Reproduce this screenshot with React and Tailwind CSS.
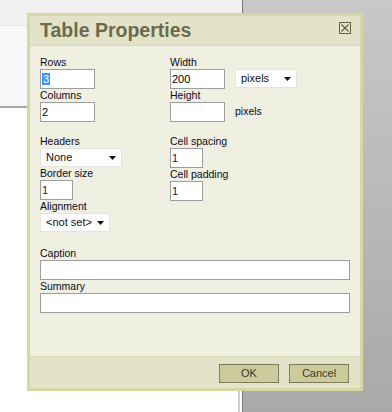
import React from 'react';

const Label = ({ children }) => (
  <div className="h-[13px] leading-[13px] text-[10.5px] text-[#0b0b1e] whitespace-nowrap">{children}</div>
);

const Field = ({ className = '', children }) => (
  <div className={`flex items-center border border-[#9d9d9d] bg-white pl-px text-[11px] leading-none ${className}`}>
    {children}
  </div>
);

const Arrow = () => (
  <svg width="7" height="4" viewBox="0 0 7 4" className="shrink-0">
    <polygon points="0,0 7,0 3.5,4" fill="#111" />
  </svg>
);

const Select = ({ className = '', value }) => (
  <div className={`flex items-center justify-between border border-[#e4e4dc] bg-white pl-[5px] pr-[5px] text-[11px] leading-none text-[#111] ${className}`}>
    <span>{value}</span>
    <Arrow />
  </div>
);

export default function App() {
  return (
    <div className="relative h-[412px] w-[392px] overflow-hidden bg-white font-['Liberation_Sans',Arial,sans-serif]">
      {/* page behind the dialog */}
      <div className="absolute left-0 top-0 h-[25px] w-[242px] bg-[#f1f1f1]" />
      <div className="absolute left-0 top-[25px] h-[81px] w-[242px] border-t border-[#e6e6e6] bg-[#f7f7f7]" />
      <div className="absolute left-0 top-[106px] h-[2px] w-[242px] bg-[#a6a6a6]" />
      <div className="absolute bottom-0 left-[238px] top-[380px] w-[2px] bg-[#cfcfcf]" />
      <div className="absolute bottom-0 left-[242px] right-0 top-0 border-l border-[#7a7a7a] bg-gradient-to-b from-[#c8c8c8] to-[#a9a9a9]" />

      {/* dialog */}
      <div className="absolute left-[27px] top-[13px] flex h-[378px] w-[336px] flex-col border-[3px] border-[#d6d6a6] bg-[#efefe2]">
        <div className="flex h-[30px] shrink-0 items-start justify-between border-b border-[#d9d9b4] bg-[#e3e3c9] pl-[10px] pr-[9px]">
          <span className="mt-[3px] text-[19.5px] font-bold leading-[23px] text-[#6c6a4d]">Table Properties</span>
          <svg width="12" height="12" viewBox="0 0 12 12" className="mt-[6px]">
            <rect x="0.5" y="0.5" width="11" height="11" fill="none" stroke="#5f5e47" />
            <path d="M2.5 2.5 L9.5 9.5 M9.5 2.5 L2.5 9.5" stroke="#5f5e47" strokeWidth="1.1" />
          </svg>
        </div>

        <div className="flex-1 pl-[10px] pt-[10px]">
          <div className="grid grid-cols-[130px_1fr]">
            <div>
              <Label>Rows</Label>
              <Field className="h-[20px] w-[55px]">
                <span className="h-[12px] bg-[#3399ff] px-px leading-[12px] text-white">3</span>
              </Field>
              <Label>Columns</Label>
              <Field className="h-[20px] w-[55px] text-black">2</Field>
            </div>
            <div>
              <Label>Width</Label>
              <div className="flex items-start gap-[10px]">
                <Field className="h-[20px] w-[55px] text-black">200</Field>
                <Select className="h-[19px] w-[62px] pl-[4px]" value="pixels" />
              </div>
              <Label>Height</Label>
              <div className="flex items-center gap-[10px]">
                <Field className="h-[20px] w-[55px]" />
                <span className="text-[10.5px] text-[#0b0b1e]">pixels</span>
              </div>
            </div>
          </div>

          <div className="mt-[13px] grid grid-cols-[130px_1fr]">
            <div>
              <Label>Headers</Label>
              <Select className="h-[19px] w-[82px]" value="None" />
              <Label>Border size</Label>
              <Field className="h-[20px] w-[33px] text-[#3b0a45]">1</Field>
              <Label>Alignment</Label>
              <Select className="h-[19px] w-[70px]" value="<not set>" />
            </div>
            <div>
              <Label>Cell spacing</Label>
              <Field className="h-[20px] w-[33px] text-[#3b0a45]">1</Field>
              <Label>Cell padding</Label>
              <Field className="h-[20px] w-[33px] text-[#3b0a45]">1</Field>
            </div>
          </div>

          <div className="mt-[15px]">
            <Label>Caption</Label>
            <Field className="h-[20px] w-[310px]" />
            <Label>Summary</Label>
            <Field className="h-[20px] w-[310px]" />
          </div>
        </div>

        <div className="flex h-[32px] shrink-0 items-start justify-end gap-[10px] border-t border-[#d9d9b4] bg-[#e3e3c9] pr-[11px] pt-[7px]">
          <button className="h-[19px] w-[60px] border border-[#7d7d5c] bg-[#cbcb9c] text-[11px] leading-none text-[#3a3a30]">OK</button>
          <button className="h-[19px] w-[60px] border border-[#7d7d5c] bg-[#cbcb9c] text-[11px] leading-none text-[#3a3a30]">Cancel</button>
        </div>
      </div>
    </div>
  );
}
